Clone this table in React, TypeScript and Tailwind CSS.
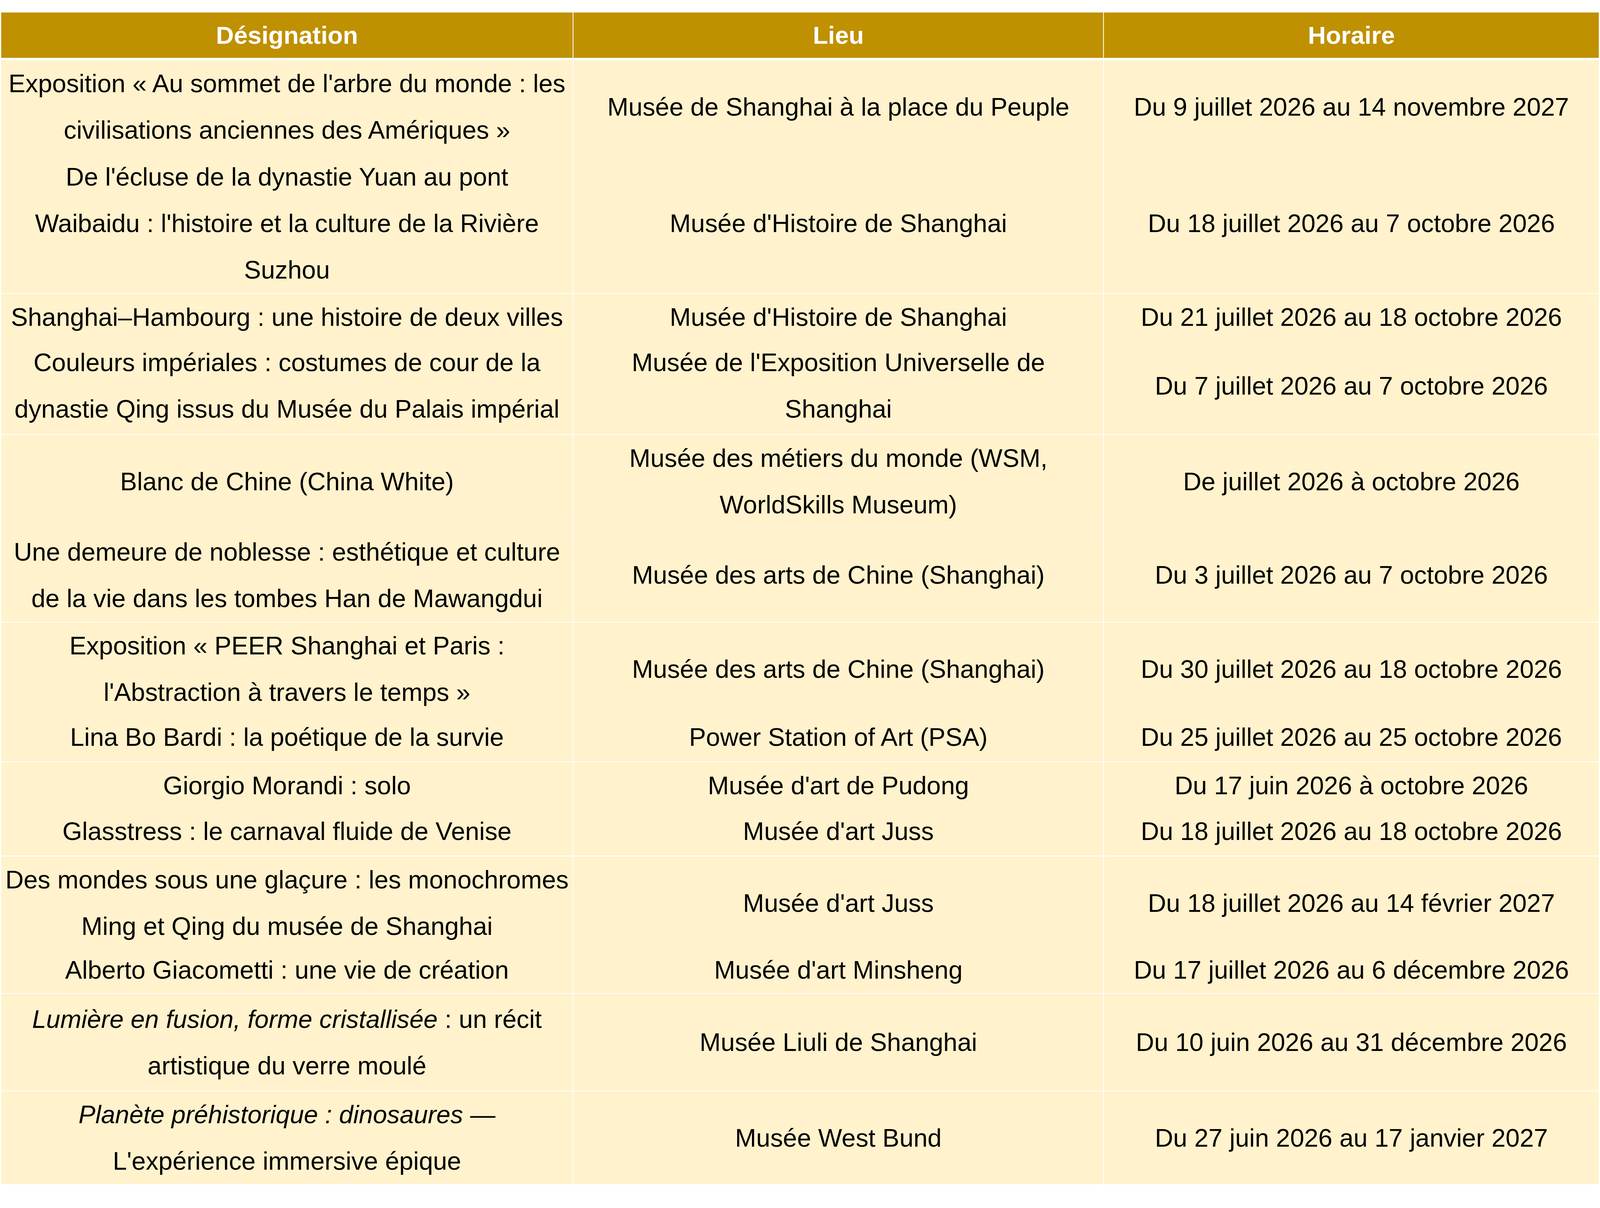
type Line = { text: string; italic?: string };

interface Row {
  h: string;
  designation: (string | Line)[];
  lieu: string[];
  horaire: string;
}

// row heights measured from the source sheet (they are not uniform)
const rows: Row[] = [
  {
    h: "h-[236px]",
    designation: ["Exposition « Au sommet de l'arbre du monde : les", "civilisations anciennes des Amériques »"],
    lieu: ["Musée de Shanghai à la place du Peuple"],
    horaire: "Du 9 juillet 2026 au 14 novembre 2027",
  },
  {
    h: "h-[358px]",
    designation: ["De l'écluse de la dynastie Yuan au pont", "Waibaidu : l'histoire et la culture de la Rivière", "Suzhou"],
    lieu: ["Musée d'Histoire de Shanghai"],
    horaire: "Du 18 juillet 2026 au 7 octobre 2026",
  },
  {
    h: "h-[109px]",
    designation: ["Shanghai–Hambourg : une histoire de deux villes"],
    lieu: ["Musée d'Histoire de Shanghai"],
    horaire: "Du 21 juillet 2026 au 18 octobre 2026",
  },
  {
    h: "h-[248px]",
    designation: ["Couleurs impériales : costumes de cour de la", "dynastie Qing issus du Musée du Palais impérial"],
    lieu: ["Musée de l'Exposition Universelle de", "Shanghai"],
    horaire: "Du 7 juillet 2026 au 7 octobre 2026",
  },
  {
    h: "h-[237px]",
    designation: ["Blanc de Chine (China White)"],
    lieu: ["Musée des métiers du monde (WSM,", "WorldSkills Museum)"],
    horaire: "De juillet 2026 à octobre 2026",
  },
  {
    h: "h-[239px]",
    designation: ["Une demeure de noblesse : esthétique et culture", "de la vie dans les tombes Han de Mawangdui"],
    lieu: ["Musée des arts de Chine (Shanghai)"],
    horaire: "Du 3 juillet 2026 au 7 octobre 2026",
  },
  {
    h: "h-[228px]",
    designation: ["Exposition « PEER Shanghai et Paris :", "l'Abstraction à travers le temps »"],
    lieu: ["Musée des arts de Chine (Shanghai)"],
    horaire: "Du 30 juillet 2026 au 18 octobre 2026",
  },
  {
    h: "h-[126px]",
    designation: ["Lina Bo Bardi : la poétique de la survie"],
    lieu: ["Power Station of Art (PSA)"],
    horaire: "Du 25 juillet 2026 au 25 octobre 2026",
  },
  {
    h: "h-[111px]",
    designation: ["Giorgio Morandi : solo"],
    lieu: ["Musée d'art de Pudong"],
    horaire: "Du 17 juin 2026 à octobre 2026",
  },
  {
    h: "h-[126px]",
    designation: ["Glasstress : le carnaval fluide de Venise"],
    lieu: ["Musée d'art Juss"],
    horaire: "Du 18 juillet 2026 au 18 octobre 2026",
  },
  {
    h: "h-[229px]",
    designation: ["Des mondes sous une glaçure : les monochromes", "Ming et Qing du musée de Shanghai"],
    lieu: ["Musée d'art Juss"],
    horaire: "Du 18 juillet 2026 au 14 février 2027",
  },
  {
    h: "h-[119px]",
    designation: ["Alberto Giacometti : une vie de création"],
    lieu: ["Musée d'art Minsheng"],
    horaire: "Du 17 juillet 2026 au 6 décembre 2026",
  },
  {
    h: "h-[247px]",
    designation: [{ italic: "Lumière en fusion, forme cristallisée", text: " : un récit" }, "artistique du verre moulé"],
    lieu: ["Musée Liuli de Shanghai"],
    horaire: "Du 10 juin 2026 au 31 décembre 2026",
  },
  {
    h: "h-[237px]",
    designation: [{ italic: "Planète préhistorique : dinosaures —", text: "" }, "L'expérience immersive épique"],
    lieu: ["Musée West Bund"],
    horaire: "Du 27 juin 2026 au 17 janvier 2027",
  },
];

// column proportions 2257 / 2091 / 1954 of the full sheet width
const cols = "grid grid-cols-[2257fr_2091fr_1954fr] gap-x-[2px]";

function Cell({ lines }: { lines: (string | Line)[] }) {
  return (
    <div className="flex min-w-0 flex-col items-center justify-center bg-[#fff2cc] text-center">
      {lines.map((l, i) =>
        typeof l === "string" ? (
          <div key={i} className="whitespace-nowrap">{l}</div>
        ) : (
          <div key={i} className="whitespace-nowrap">
            <span className="italic">{l.italic}</span>
            {l.text}
          </div>
        )
      )}
    </div>
  );
}

export default function App() {
  return (
    <div
      className="min-h-screen w-full overflow-hidden bg-white px-[3px] pt-[32px] text-black"
      style={{ fontFamily: '"Liberation Sans", Arial, sans-serif' }}
    >
      <div className="flex w-full flex-col gap-y-[2px]">
        {/* Header */}
        <div className={`${cols} mb-[4px] h-[116px] text-[1.552vw] font-bold leading-[116px] text-white`}>
          <div className="bg-[#bf9000] text-center">Désignation</div>
          <div className="bg-[#bf9000] text-center">Lieu</div>
          <div className="bg-[#bf9000] text-center">Horaire</div>
        </div>

        {rows.map((r, i) => (
          <div key={i} className={`${cols} ${r.h} text-[1.5835vw] leading-[119px]`}>
            <Cell lines={r.designation} />
            <Cell lines={r.lieu} />
            <Cell lines={[r.horaire]} />
          </div>
        ))}
      </div>
    </div>
  );
}
